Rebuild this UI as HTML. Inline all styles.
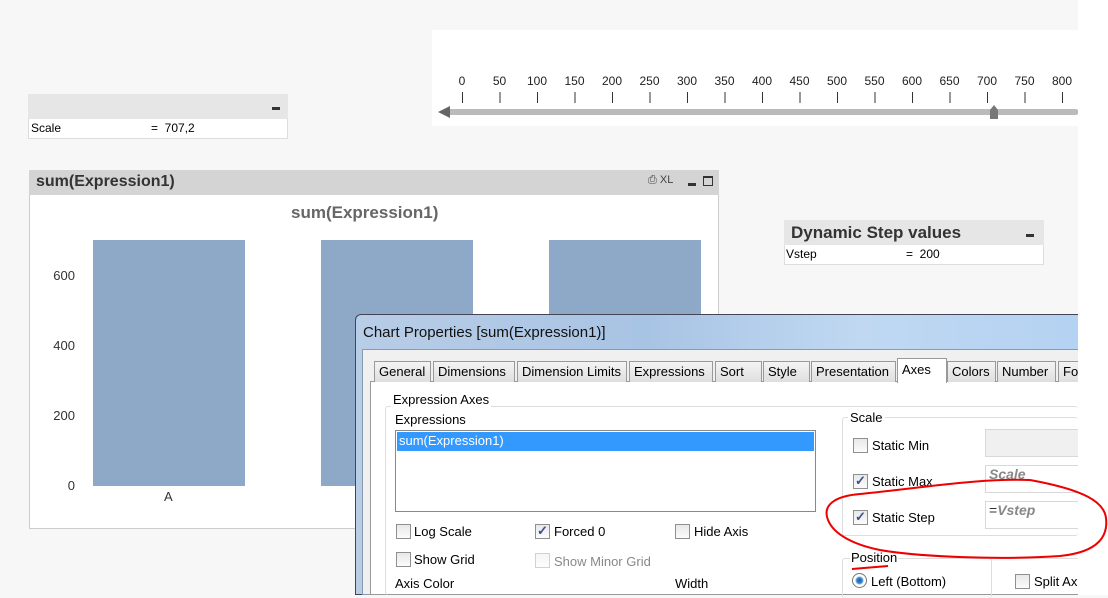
<!DOCTYPE html>
<html><head><style>
*{margin:0;padding:0;box-sizing:border-box}
body{width:1108px;height:595px;background:#f7f7f7;position:relative;overflow:hidden;font-family:"Liberation Sans",sans-serif}
.a{position:absolute}
.cb{position:absolute;width:15px;height:15px;border:1px solid #8e8f8f;background:linear-gradient(#e8e8e8,#fbfbfb)}
.cb.k::after{content:"✓";position:absolute;left:1px;top:-2px;font-size:13px;color:#3a4f8c;font-weight:bold}
.tab{position:absolute;top:361px;height:21px;border:1px solid #999;border-bottom:none;background:linear-gradient(#f4f4f4,#dedede);font-size:13px;padding:2px 0 0 4px;white-space:nowrap;overflow:hidden}
.lbl{position:absolute;font-size:13px;color:#000;white-space:nowrap}
.fld{position:absolute;background:#f0f0f0;border:1px solid #d8d8d8;font-size:14px;font-style:italic;font-weight:bold;color:#888;padding-left:3px}
</style></head><body>
<div class="a" style="left:1078px;top:0;width:30px;height:595px;background:#fff"></div>
<div class="a" style="left:432px;top:30px;width:646px;height:96px;background:#fff"></div>
<svg class="a" style="left:0;top:0" width="1108" height="130">
<g font-family="Liberation Sans" font-size="12" fill="#222" text-anchor="middle">
<text x="462" y="85">0</text><text x="499.5" y="85">50</text><text x="537" y="85">100</text><text x="574.5" y="85">150</text><text x="612" y="85">200</text><text x="649.5" y="85">250</text><text x="687" y="85">300</text><text x="724.5" y="85">350</text><text x="762" y="85">400</text><text x="799.5" y="85">450</text><text x="837" y="85">500</text><text x="874.5" y="85">550</text><text x="912" y="85">600</text><text x="949.5" y="85">650</text><text x="987" y="85">700</text><text x="1024.5" y="85">750</text><text x="1062" y="85">800</text>
</g>
<g stroke="#333" stroke-width="1">
<path d="M462.5 92v11M500 92v11M537.5 92v11M575 92v11M612.5 92v11M650 92v11M687.5 92v11M725 92v11M762.5 92v11M800 92v11M837.5 92v11M875 92v11M912.5 92v11M950 92v11M987.5 92v11M1025 92v11M1062.5 92v11"/>
</g>
<rect x="447" y="109" width="631" height="6" fill="#bbb" rx="2"/>
<path d="M438 112l12-6v12z" fill="#666"/>
<path d="M990 110l4-5 4 5v9h-8z" fill="#777"/>
</svg>
<div class="a" style="left:28px;top:94px;width:260px;height:45px;background:#fff;border:1px solid #ddd"></div>
<div class="a" style="left:28px;top:94px;width:260px;height:25px;background:#e6e6e6"></div>
<div class="a" style="left:272px;top:107px;width:8px;height:3px;background:#333"></div>
<div class="a" style="left:31px;top:121px;font-size:12px">Scale</div>
<div class="a" style="left:151px;top:121px;font-size:12px">=&nbsp; 707,2</div>
<div class="a" style="left:784px;top:220px;width:260px;height:45px;background:#fff;border:1px solid #ddd"></div>
<div class="a" style="left:784px;top:220px;width:260px;height:25px;background:#e6e6e6"></div>
<div class="a" style="left:791px;top:223px;font-size:17px;font-weight:bold;color:#333">Dynamic Step values</div>
<div class="a" style="left:1026px;top:234px;width:8px;height:3px;background:#333"></div>
<div class="a" style="left:786px;top:247px;font-size:12px">Vstep</div>
<div class="a" style="left:906px;top:247px;font-size:12px">=&nbsp; 200</div>
<div class="a" style="left:29px;top:170px;width:690px;height:359px;background:#fff;border:1px solid #ccc"></div>
<div class="a" style="left:29px;top:170px;width:690px;height:25px;background:#d4d4d4"></div>
<div class="a" style="left:36px;top:173px;font-size:16px;font-weight:bold;color:#333">sum(Expression1)</div>
<div class="a" style="left:648px;top:174px;font-size:11px;color:#444">⎙ XL</div>
<div class="a" style="left:688px;top:183px;width:8px;height:3px;background:#333"></div>
<div class="a" style="left:703px;top:176px;width:10px;height:10px;border:1.5px solid #333;border-top-width:2.5px"></div>
<div class="a" style="left:291px;top:203px;font-size:17px;font-weight:bold;color:#666">sum(Expression1)</div>
<div class="a" style="left:93px;top:240px;width:152px;height:246px;background:#8ea9c8"></div>
<div class="a" style="left:321px;top:240px;width:152px;height:246px;background:#8ea9c8"></div>
<div class="a" style="left:549px;top:240px;width:152px;height:246px;background:#8ea9c8"></div>
<div class="a" style="left:45px;top:268px;font-size:13px;color:#333;width:30px;text-align:right">600</div>
<div class="a" style="left:45px;top:338px;font-size:13px;color:#333;width:30px;text-align:right">400</div>
<div class="a" style="left:45px;top:408px;font-size:13px;color:#333;width:30px;text-align:right">200</div>
<div class="a" style="left:45px;top:478px;font-size:13px;color:#333;width:30px;text-align:right">0</div>
<div class="a" style="left:164px;top:489px;font-size:13px;color:#333">A</div>
<div class="a" style="left:355px;top:314px;width:723px;height:281px;border:1px solid #445;border-right:none;border-radius:6px 0 0 0;background:linear-gradient(90deg,#b8cde6,#a8c4e4 40%,#c0d8f2 70%,#b4d2f2)"></div>
<div class="a" style="left:363px;top:324px;font-size:15px;color:#111">Chart Properties [sum(Expression1)]</div>
<div class="a" style="left:362px;top:349px;width:716px;height:246px;background:#f0f0f0;border:1px solid #8a9bb0;border-right:none"></div>
<div class="a" style="left:370px;top:381px;width:708px;height:214px;background:#fff;border:1px solid #999;border-right:none"></div>
<div class="tab" style="left:374px;width:57px">General</div>
<div class="tab" style="left:433px;width:82px">Dimensions</div>
<div class="tab" style="left:517px;width:110px">Dimension Limits</div>
<div class="tab" style="left:629px;width:84px">Expressions</div>
<div class="tab" style="left:715px;width:47px">Sort</div>
<div class="tab" style="left:763px;width:47px">Style</div>
<div class="tab" style="left:811px;width:85px">Presentation</div>
<div class="tab" style="left:897px;width:50px;top:358px;height:25px;background:#fff;padding-top:3px">Axes</div>
<div class="tab" style="left:947px;width:49px">Colors</div>
<div class="tab" style="left:997px;width:59px">Number</div>
<div class="tab" style="left:1058px;width:20px;border-right:none">Fo</div>
<div class="a" style="left:385px;top:406px;width:693px;height:189px;border:1px solid #ddd;border-right:none;border-bottom:none;border-radius:3px"></div>
<div class="lbl" style="left:391px;top:392px;background:#fff;padding:0 2px">Expression Axes</div>
<div class="lbl" style="left:395px;top:412px">Expressions</div>
<div class="a" style="left:395px;top:430px;width:421px;height:82px;border:1px solid #888;background:#fff"></div>
<div class="a" style="left:397px;top:432px;width:417px;height:19px;background:#3399ff;color:#fff;font-size:13px;padding:1px 0 0 2px">sum(Expression1)</div>
<div class="cb" style="left:396px;top:524px"></div><div class="lbl" style="left:414px;top:524px">Log Scale</div>
<div class="cb k" style="left:535px;top:524px"></div><div class="lbl" style="left:554px;top:524px">Forced 0</div>
<div class="cb" style="left:675px;top:524px"></div><div class="lbl" style="left:694px;top:524px">Hide Axis</div>
<div class="cb" style="left:396px;top:552px"></div><div class="lbl" style="left:414px;top:552px">Show Grid</div>
<div class="cb" style="left:535px;top:553px;opacity:.4"></div><div class="lbl" style="left:554px;top:554px;color:#888">Show Minor Grid</div>
<div class="lbl" style="left:395px;top:576px">Axis Color</div>
<div class="lbl" style="left:675px;top:576px">Width</div>
<div class="a" style="left:842px;top:417px;width:236px;height:119px;border:1px solid #ddd;border-right:none;border-radius:3px"></div>
<div class="lbl" style="left:848px;top:410px;background:#fff;padding:0 2px">Scale</div>
<div class="cb" style="left:853px;top:438px"></div><div class="lbl" style="left:872px;top:438px">Static Min</div>
<div class="fld" style="left:985px;top:429px;width:93px;height:28px;border-right:none"></div>
<div class="cb k" style="left:853px;top:474px"></div><div class="lbl" style="left:872px;top:474px">Static Max</div>
<div class="fld" style="left:985px;top:465px;width:93px;height:28px;background:#fff;border-right:none">Scale</div>
<div class="cb k" style="left:853px;top:510px"></div><div class="lbl" style="left:872px;top:510px">Static Step</div>
<div class="fld" style="left:985px;top:501px;width:93px;height:28px;background:#fff;border-right:none"><span style="font-style:normal;font-weight:normal;color:#333">=</span>Vstep</div>
<div class="a" style="left:842px;top:558px;width:150px;height:40px;border:1px solid #ddd;border-bottom:none;border-radius:3px"></div>
<div class="a" style="left:991px;top:558px;width:87px;height:40px;border-top:1px solid #ddd"></div>
<div class="lbl" style="left:850px;top:550px;background:#fff;padding:0 1px">Position</div>
<div class="a" style="left:852px;top:573px;width:15px;height:15px;border-radius:50%;border:1px solid #777;background:radial-gradient(circle,#1a5a9c 0,#3c8ed8 3px,#fff 4.5px)"></div>
<div class="lbl" style="left:871px;top:574px">Left (Bottom)</div>
<div class="cb" style="left:1015px;top:574px"></div><div class="lbl" style="left:1034px;top:574px">Split Ax</div>
<svg class="a" style="left:0;top:0" width="1108" height="595">
<path d="M1030 480 C980 478 920 488 860 494 C835 496 822 505 828 520 C834 535 855 545 880 550 C920 557 1000 560 1060 556 C1100 552 1108 535 1106 518 C1104 502 1085 490 1030 480" fill="none" stroke="#e00" stroke-width="2"/>
<path d="M852 569 L888 566" stroke="#e00" stroke-width="2"/>
</svg>
</body></html>
